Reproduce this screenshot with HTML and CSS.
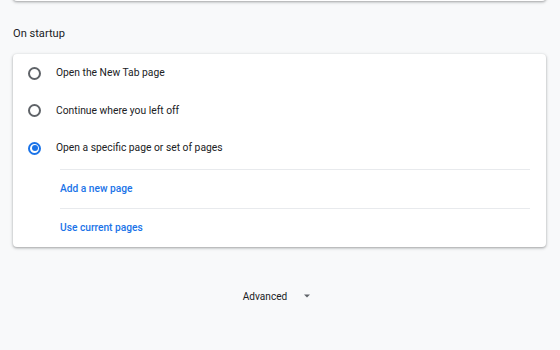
FILE: index.html
```html
<!DOCTYPE html>
<html>
<head>
<meta charset="utf-8">
<link rel="stylesheet" href="styles.css">
</head>
<body>
<div class="page">
  <div class="card card-top"></div>
  <h2 class="section-title">On startup</h2>
  <div class="card">
    <div class="radio-row">
      <span class="radio"></span>
      <span class="label">Open the New Tab page</span>
    </div>
    <div class="radio-row">
      <span class="radio"></span>
      <span class="label">Continue where you left off</span>
    </div>
    <div class="radio-row">
      <span class="radio checked"></span>
      <span class="label">Open a specific page or set of pages</span>
    </div>
    <div class="sub-list">
      <div class="link-row"><span class="link">Add a new page</span></div>
      <div class="link-row"><span class="link">Use current pages</span></div>
    </div>
  </div>
  <div class="advanced">
    <span class="advanced-label">Advanced</span>
    <svg class="arrow" width="10" height="10" viewBox="0 0 10 10"><path d="M2 3.5 L8 3.5 L5 6.5 Z" fill="#5f6368"/></svg>
  </div>
</div>
</body>
</html>
```

FILE: styles.css
```css
html, body {
  margin: 0;
  padding: 0;
  background: #f8f9fa;
  font-family: Roboto, "Noto Sans", sans-serif;
  color: #202124;
  height: 100%;
  overflow: hidden;
}

.page {
  width: 533px;
  margin-left: 13px;
  display: flex;
  flex-direction: column;
}

.card {
  background: #fff;
  border-radius: 4px;
  box-shadow: 0 1px 2px rgba(60, 64, 67, 0.3), 0 1px 3px 1px rgba(60, 64, 67, 0.15);
}

.card-top {
  height: 20px;
  margin-top: -19px;
}

.section-title {
  margin: 0;
  font-weight: 400;
  font-size: 11.1px;
  line-height: 14px;
  padding-top: 26px;
  padding-bottom: 13px;
  color: #202124;
}

.radio-row {
  height: 37.5px;
  display: flex;
  align-items: center;
  padding-left: 15px;
}

.radio {
  box-sizing: border-box;
  width: 13px;
  height: 13px;
  border-radius: 50%;
  border: 2px solid #5f6368;
  margin-right: 15px;
  position: relative;
  flex: none;
  top: 0.5px;
}

.radio.checked {
  border-color: #1a73e8;
}

.radio.checked::after {
  content: "";
  position: absolute;
  left: 1.5px;
  top: 1.5px;
  width: 6px;
  height: 6px;
  border-radius: 50%;
  background: #1a73e8;
}

.label {
  font-size: 10.3px;
}

.sub-list {
  margin-left: 47px;
  margin-right: 16px;
  margin-top: 2px;
}

.link-row {
  height: 38px;
  border-top: 1px solid #e8eaed;
  display: flex;
  align-items: center;
}

.link {
  color: #1a73e8;
  font-size: 10.2px;
  font-weight: 500;
}

.advanced {
  display: flex;
  justify-content: center;
  align-items: center;
  margin-top: 44px;
  margin-left: -13px;
  width: 555px;
  padding-right: 5px;
  gap: 15px;
}

.advanced-label {
  font-size: 10.1px;
  color: #202124;
}
```
